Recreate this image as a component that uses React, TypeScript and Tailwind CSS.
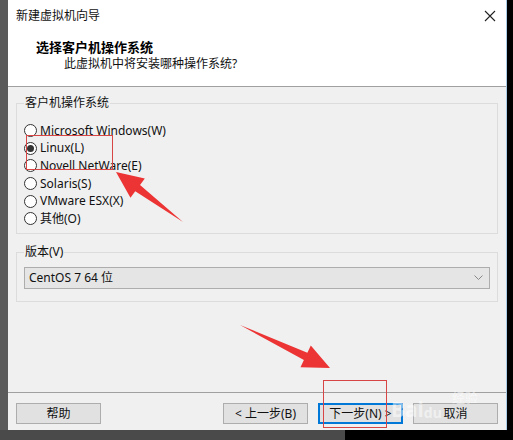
import React from "react";

const ui = { fontFamily: '"Noto Sans", "Noto Sans CJK SC", sans-serif' };

const osList = [
  "Microsoft Windows(W)",
  "Linux(L)",
  "Novell NetWare(E)",
  "Solaris(S)",
  "VMware ESX(X)",
  "其他(O)",
];

function Radio({ checked, label }: { checked?: boolean; label: string }) {
  return (
    <div className="flex h-[17.6px] items-center gap-[3px]">
      <span className="flex h-[13px] w-[13px] items-center justify-center rounded-full border border-[#333] bg-white">
        {checked && <span className="h-[7px] w-[7px] rounded-full bg-[#333]" />}
      </span>
      <span className="text-[12px] leading-none text-[#111]">{label}</span>
    </div>
  );
}

function Button({ label, focused }: { label: string; focused?: boolean }) {
  return (
    <div
      className={
        focused
          ? "flex h-[21px] w-[85px] items-center justify-center border-2 border-[#0078d7] bg-[#e1e1e1] text-[12px] text-[#111]"
          : "flex h-[21px] w-[85px] items-center justify-center border border-[#adadad] bg-[#e1e1e1] text-[12px] text-[#111]"
      }
    >
      {label}
    </div>
  );
}

// callout arrow: thin tail widening into a triangular head
function Arrow({ from, to }: { from: [number, number]; to: [number, number] }) {
  const [x0, y0] = from;
  const [x1, y1] = to;
  const len = Math.hypot(x1 - x0, y1 - y0);
  const ux = (x1 - x0) / len;
  const uy = (y1 - y0) / len;
  const px = -uy;
  const py = ux;
  const head = 27;
  const bx = x1 - ux * head;
  const by = y1 - uy * head;
  const pts = [
    [x0, y0],
    [bx + px * 4, by + py * 4],
    [bx + px * 12, by + py * 12],
    [x1, y1],
    [bx - px * 12, by - py * 12],
    [bx - px * 4, by - py * 4],
  ]
    .map((p) => p.join(","))
    .join(" ");
  return <polygon points={pts} fill="#ec3434" />;
}

export default function App() {
  return (
    <div className="relative h-[440px] w-[513px] overflow-hidden bg-black" style={ui}>
      <div className="flex h-[430px]">
        <div className="w-[8px] bg-[#5a5a5a]" />
        <div className="flex w-[499px] flex-col border-r border-[#a9cde9] bg-[#f0f0f0]">
          {/* title bar */}
          <div className="flex h-[31px] items-center justify-between bg-white pl-[8px] pr-[10px] pt-[1px]">
            <span className="text-[12px] text-[#111]">新建虚拟机向导</span>
            <svg width="12" height="12" viewBox="0 0 12 12">
              <path d="M1 1L11 11M11 1L1 11" stroke="#222" strokeWidth="1.1" />
            </svg>
          </div>
          {/* header */}
          <div className="flex h-[56px] flex-col border-b border-[#a0a0a0] bg-white pl-[28px] pt-[7px]">
            <span className="text-[13px] font-bold leading-[18px] text-black">选择客户机操作系统</span>
            <span className="pl-[28px] text-[12px] leading-[16px] text-[#111]">此虚拟机中将安装哪种操作系统?</span>
          </div>
          {/* body */}
          <div className="flex flex-1 flex-col px-[8px] pt-[8px]">
            <fieldset className="h-[139px] border border-[#dcdcdc] pl-[7px]">
              <legend className="px-[1px] text-[12px] leading-[16px] text-[#111]">客户机操作系统</legend>
              <div className="flex flex-col pt-[11px]">
                {osList.map((os) => (
                  <Radio key={os} label={os} checked={os === "Linux(L)"} />
                ))}
              </div>
            </fieldset>
            <fieldset className="mt-[10px] h-[58px] border border-[#dcdcdc] px-[7px]">
              <legend className="px-[1px] text-[12px] leading-[16px] text-[#111]">版本(V)</legend>
              <div className="mt-[7px] flex h-[22px] items-center justify-between border border-[#adadad] bg-[#e5e5e5] pl-[4px] pr-[6px]">
                <span className="text-[12px] text-[#111]">CentOS 7 64 位</span>
                <svg width="9" height="6" viewBox="0 0 9 6">
                  <path d="M0.5 0.5L4.5 4.5L8.5 0.5" fill="none" stroke="#888" strokeWidth="1" />
                </svg>
              </div>
            </fieldset>
            <div className="flex-1" />
          </div>
          {/* footer */}
          <div className="flex h-[38px] items-start border-t border-[#a0a0a0] px-[8px] pt-[10px]">
            <Button label="帮助" />
            <div className="flex-1" />
            <div className="flex gap-[10px]">
              <Button label="< 上一步(B)" />
              <Button label="下一步(N) >" focused />
              <Button label="取消" />
            </div>
          </div>
        </div>
      </div>
      <div className="h-[10px] w-[345px] bg-[#4a4a4a]" />

      {/* red annotations */}
      <div className="absolute left-[26px] top-[135px] h-[35px] w-[87px] border border-[#d84545]" />
      <div className="absolute left-[323px] top-[380px] h-[48px] w-[64px] border border-[#d84545]" />
      <svg className="absolute left-0 top-0" width="513" height="440">
        <Arrow from={[183, 222]} to={[116, 172]} />
        <Arrow from={[240, 325]} to={[330, 368]} />
      </svg>
      {/* watermark */}
      <div className="absolute left-[391px] top-[399px] flex items-end font-bold leading-none text-white/50">
        <span className="text-[21px]">Bai</span>
        <span className="text-[14px]">du</span>
      </div>
      <div className="absolute left-[452px] top-[391px] text-[13px] leading-none text-white/50">经验</div>
    </div>
  );
}
